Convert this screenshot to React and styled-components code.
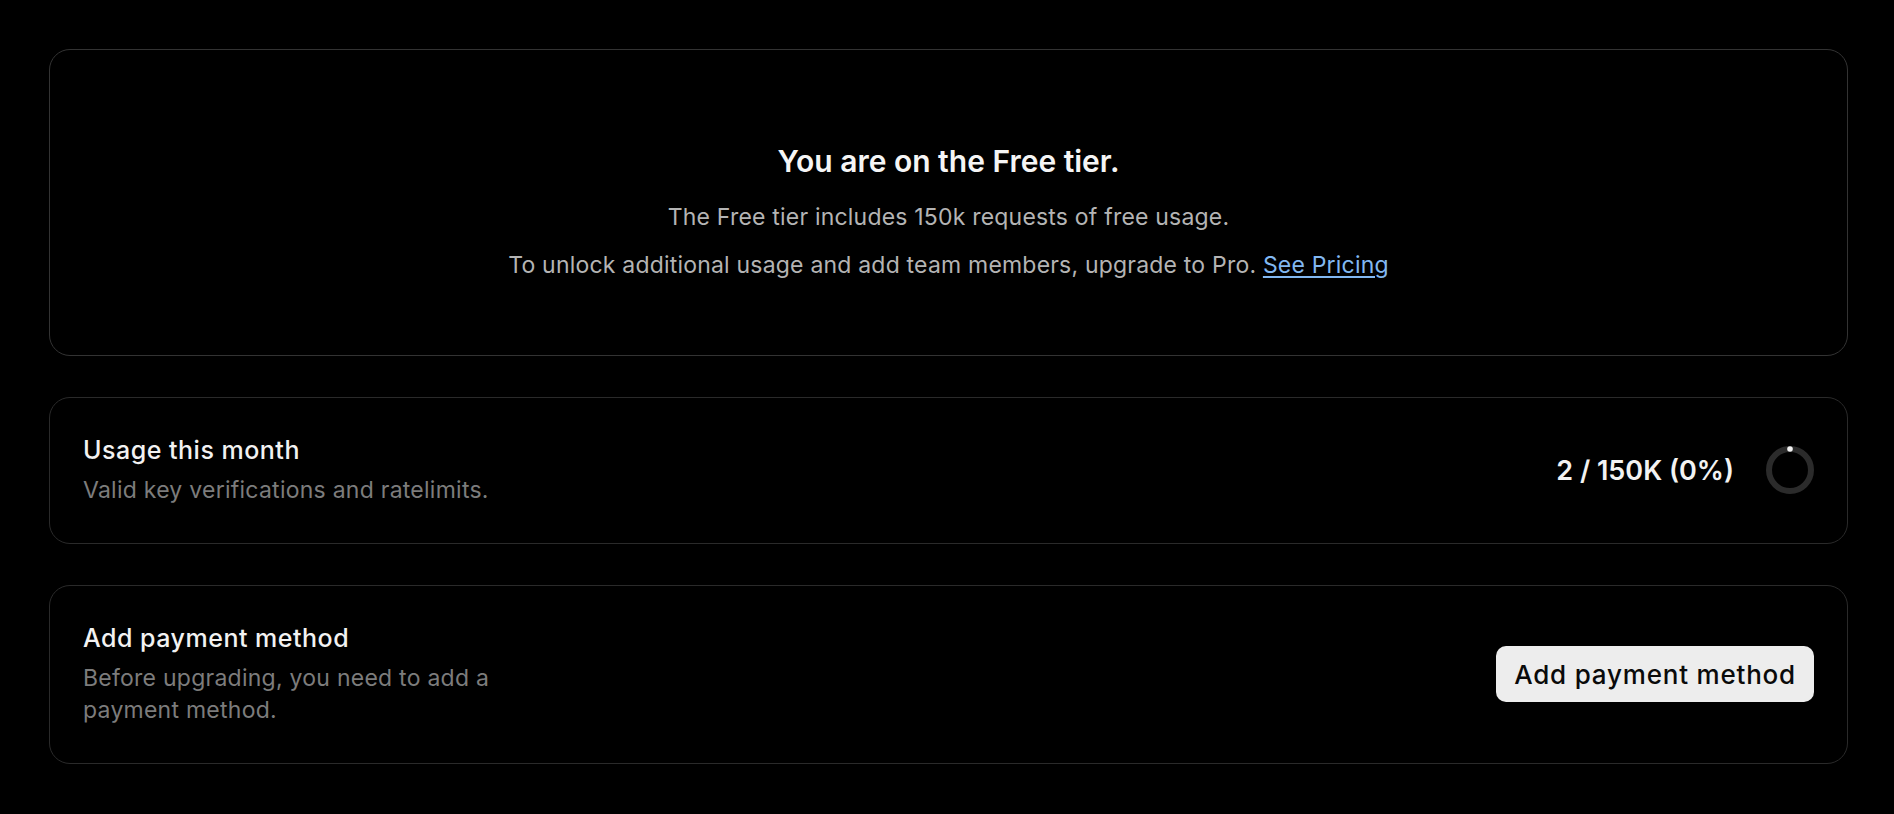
import React from "react";
import styled, { createGlobalStyle } from "styled-components";

const Global = createGlobalStyle`
  html, body { margin: 0; padding: 0; background: #000; }
  body { font-family: Inter, "Noto Sans", sans-serif; color: #ededed; -webkit-font-smoothing: antialiased; }
  * { box-sizing: border-box; }
`;

const Page = styled.main`
  padding: 49px 46px 40px 49px;
  display: flex;
  flex-direction: column;
  gap: 41px;
`;

const Card = styled.section`
  border: 1px solid ${(p) => (p.$strong ? "#333" : "#2a2a2a")};
  border-radius: 21px;
  background: #000;
`;

const Hero = styled(Card)`
  padding: 93px 32px 74px;
  display: flex;
  flex-direction: column;
  align-items: center;
  text-align: center;
`;

const HeroTitle = styled.h2`
  margin: 0;
  font-size: 30px;
  line-height: 36px;
  font-weight: 600;
  color: #f5f5f5;
`;

const HeroText = styled.p`
  margin: ${(p) => (p.$first ? "22px" : "16px")} 0 0;
  font-size: 23px;
  line-height: 32px;
  letter-spacing: 0.2px;
  color: #b4b4b4;
`;

const Link = styled.a`
  color: #82b8f2;
  text-decoration: underline;
  text-underline-offset: 3px;
`;

const Row = styled(Card)`
  padding: 36px 33px 37px;
  display: flex;
  align-items: center;
  justify-content: space-between;
  gap: 24px;
`;

const Info = styled.div`
  display: flex;
  flex-direction: column;
  gap: 8px;
  max-width: ${(p) => p.$max || "none"};
`;

const RowTitle = styled.h3`
  margin: 0;
  font-size: 25px;
  line-height: 32px;
  font-weight: 500;
  letter-spacing: 0.5px;
  color: #f2f2f2;
`;

const RowText = styled.p`
  margin: 0;
  font-size: 23px;
  line-height: 32px;
  letter-spacing: 0.25px;
  color: #7c7c7c;
`;

const Stat = styled.div`
  display: flex;
  align-items: center;
  gap: 32px;
`;

const StatValue = styled.span`
  font-size: 27px;
  font-weight: 600;
  color: #f2f2f2;
`;

const Button = styled.button`
  height: 56px;
  padding: 0 18px;
  border: none;
  border-radius: 10px;
  background: #ededed;
  color: #0a0a0a;
  font-family: inherit;
  font-size: 26px;
  font-weight: 500;
  letter-spacing: 0.8px;
  cursor: pointer;
`;

function Ring() {
  return (
    <svg width="48" height="48" viewBox="0 0 48 48">
      <circle cx="24" cy="24" r="21" fill="none" stroke="#2b2b2b" strokeWidth="6" />
      <circle cx="24" cy="3" r="2.8" fill="#f2f2f2" />
    </svg>
  );
}

export default function App() {
  return (
    <>
      <Global />
      <Page>
        <Hero $strong>
          <HeroTitle>You are on the Free tier.</HeroTitle>
          <HeroText $first>The Free tier includes 150k requests of free usage.</HeroText>
          <HeroText>
            To unlock additional usage and add team members, upgrade to Pro.{" "}
            <Link href="#">See Pricing</Link>
          </HeroText>
        </Hero>
        <Row>
          <Info>
            <RowTitle>Usage this month</RowTitle>
            <RowText>Valid key verifications and ratelimits.</RowText>
          </Info>
          <Stat>
            <StatValue>2 / 150K (0%)</StatValue>
            <Ring />
          </Stat>
        </Row>
        <Row>
          <Info $max="440px">
            <RowTitle>Add payment method</RowTitle>
            <RowText>Before upgrading, you need to add a payment method.</RowText>
          </Info>
          <Button>Add payment method</Button>
        </Row>
      </Page>
    </>
  );
}
